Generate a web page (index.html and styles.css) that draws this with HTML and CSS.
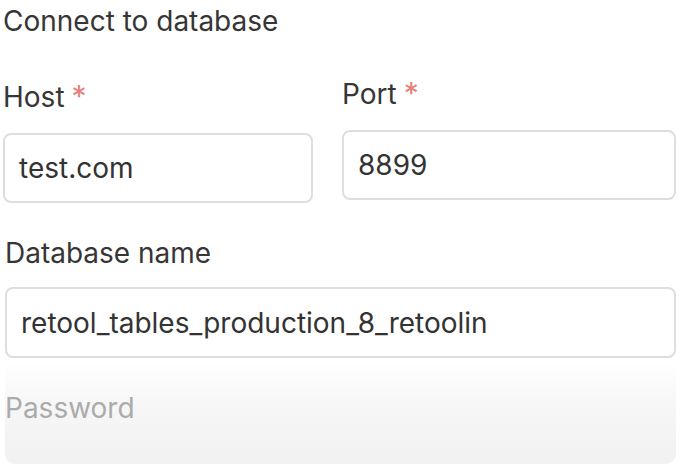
FILE: index.html
```html
<!DOCTYPE html>
<html>
<head>
<meta charset="utf-8">
<link rel="stylesheet" href="styles.css">
</head>
<body>
<div class="page">
  <h1 class="title">Connect to database</h1>
  <div class="row">
    <div class="field">
      <label class="label"><span>Host</span><span class="req">*</span></label>
      <div class="input">test.com</div>
    </div>
    <div class="field field-right">
      <label class="label"><span>Port</span><span class="req">*</span></label>
      <div class="input">8899</div>
    </div>
  </div>
  <div class="field field-full">
    <label class="label label-db">Database name</label>
    <div class="input input-db">retool_tables_production_8_retoolin</div>
  </div>
  <div class="fade">
    <span class="fade-label">Password</span>
  </div>
</div>
</body>
</html>
```
FILE: styles.css
```css
* { box-sizing: border-box; }
html, body { margin: 0; padding: 0; background: #fff; }
body {
  font-family: Inter, "Noto Sans", "Liberation Sans", sans-serif;
  color: #363636;
  width: 692px;
  height: 476px;
  overflow: hidden;
}
.page {
  padding: 5px 16px 0 3px;
  display: flex;
  flex-direction: column;
}
.title {
  margin: 0;
  font-size: 28px;
  font-weight: 400;
  line-height: 32px;
}
.row {
  display: grid;
  grid-template-columns: 310px 334px;
  column-gap: 29px;
  margin-top: 43px;
}
.field { display: flex; flex-direction: column; }
.field-right { margin-top: -3px; }
.label {
  display: flex;
  align-items: baseline;
  gap: 7px;
  font-size: 28px;
  line-height: 32px;
  height: 32px;
}
.req { color: #e5807a; font-size: 30px; }
.input {
  margin-top: 21px;
  height: 70px;
  border: 2px solid #dedede;
  border-radius: 8px;
  padding: 0 14px;
  font-size: 28px;
  display: flex;
  align-items: center;
  color: #333;
}
.field-full { margin: 34px 0 0 2px; }
.input-db { margin-top: 18px; height: 71px; padding-left: 14px; }
.fade {
  margin: 4px 0 0 2px;
  height: 102px;
  border-radius: 10px;
  background: linear-gradient(to bottom, #ffffff 0%, #f7f7f7 40%, #f1f1f1 100%);
  padding-top: 30px;
}
.fade-label {
  font-size: 28px;
  line-height: 32px;
  color: #ababab;
}
```
